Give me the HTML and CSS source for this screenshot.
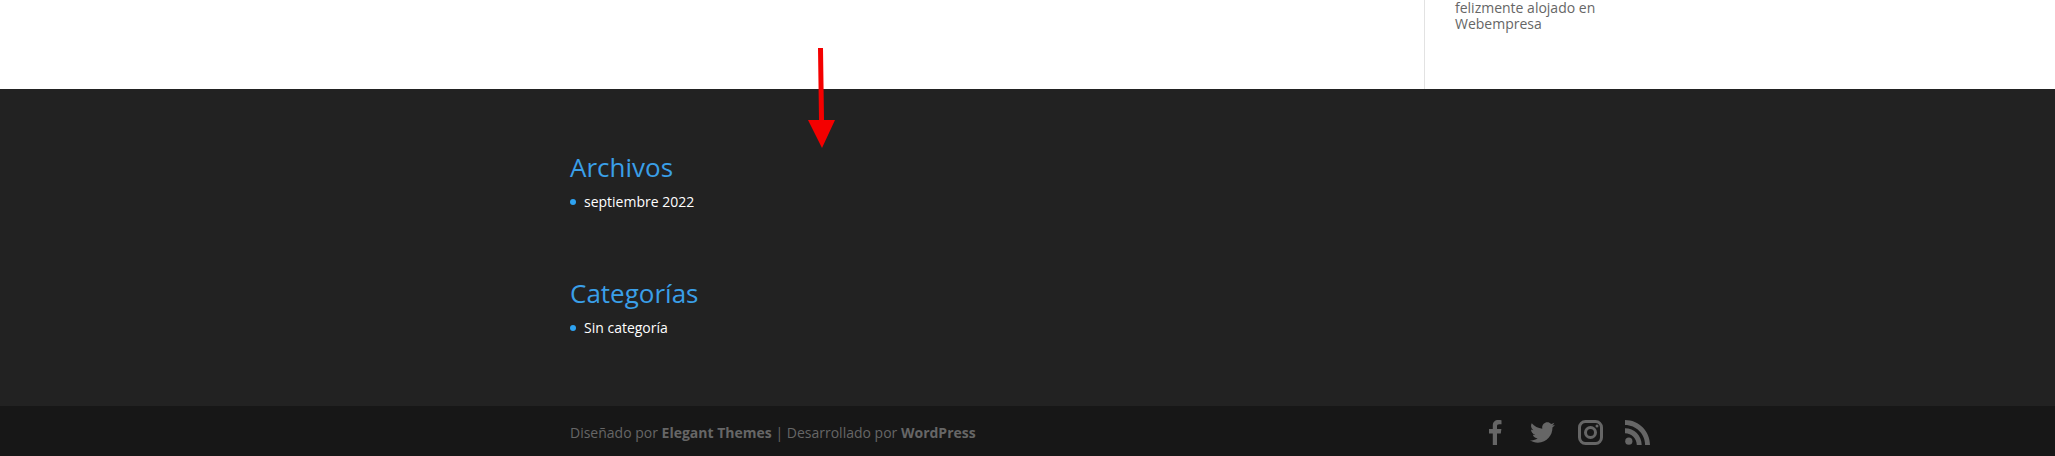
FILE: index.html
```html
<!DOCTYPE html>
<html lang="es">
<head>
    <meta charset="UTF-8" />
    <title>Webempresa</title>
    <link rel="stylesheet" href="styles.css">
</head>
<body>
    <section class="contenido">
        <div class="contenedor contenido-fila">
            <aside class="barra-lateral">
                <p>felizmente alojado en Webempresa</p>
            </aside>
        </div>
    </section>

    <footer>
        <div class="pie-widgets">
            <div class="contenedor">
                <div class="widget">
                    <h4>Archivos</h4>
                    <ul>
                        <li><a href="#">septiembre 2022</a></li>
                    </ul>
                </div>
                <div class="widget">
                    <h4>Categorías</h4>
                    <ul>
                        <li><a href="#">Sin categoría</a></li>
                    </ul>
                </div>
            </div>
        </div>
        <div class="pie-inferior">
            <div class="contenedor pie-fila">
                <p class="creditos">Diseñado por <b>Elegant Themes</b> | Desarrollado por <b>WordPress</b></p>
                <div class="redes">
                    <a href="#" class="red-f"><svg width="13" height="25" viewBox="0 0 13 25"><path d="M8 25V13.500h3.800l.6-4.400H8V6.400c0-1.300.4-2.100 2.200-2.100h2.300V.3C12.100.2 10.700 0 9.200 0 6 0 3.800 1.900 3.800 5.400v3.700H0v4.400h3.800V25z"/></svg></a>
                    <a href="#" class="red-t"><svg width="25" height="25" viewBox="0 0 512 512"><path d="M459.37 151.716c.325 4.548.325 9.097.325 13.645 0 138.72-105.583 298.558-298.558 298.558-59.452 0-114.68-17.219-161.137-47.106 8.447.974 16.568 1.299 25.34 1.299 49.055 0 94.213-16.568 130.274-44.832-46.132-.975-84.792-31.188-98.112-72.772 6.498.974 12.995 1.624 19.818 1.624 9.421 0 18.843-1.3 27.614-3.573-48.081-9.747-84.143-51.98-84.143-102.985v-1.299c13.969 7.797 30.214 12.67 47.431 13.319-28.264-18.843-46.781-51.005-46.781-87.391 0-19.492 5.197-37.36 14.294-52.954 51.655 63.675 129.3 105.258 216.365 109.807-1.624-7.797-2.599-15.918-2.599-24.04 0-57.828 46.782-104.934 104.934-104.934 30.213 0 57.502 12.67 76.67 33.137 23.715-4.548 46.456-13.32 66.599-25.34-7.798 24.366-24.366 44.833-46.132 57.827 21.117-2.273 41.584-8.122 60.426-16.243-14.292 20.791-32.161 39.308-52.628 54.253z"/></svg></a>
                    <a href="#" class="red-i"><svg width="25" height="25" viewBox="0 0 25 25"><rect x="1.500" y="1.500" width="22" height="22" rx="6" class="trazo"/><circle cx="12.500" cy="12.500" r="5" class="trazo"/><circle cx="19" cy="6" r="1.500"/></svg></a>
                    <a href="#" class="red-r"><svg width="25" height="25" viewBox="0 0 25 25"><circle cx="3.800" cy="21.200" r="3.600"/><path d="M0 8.300v4.900c6.600 0 11.800 5.200 11.800 11.800h4.900C16.700 15.700 9.300 8.300 0 8.300z"/><path d="M0 0v4.900C11.100 4.900 20.100 13.900 20.100 25H25C25 11.200 13.800 0 0 0z"/></svg></a>
                </div>
            </div>
        </div>
    </footer>

    <!-- Flecha roja encima de la página -->
    <svg class="flecha" width="28" height="100" viewBox="0 0 28 100">
        <path d="M10 0 L15 0 L16 72 L27 72 L14 100 L0 72 L11 72 Z" fill="#f40000"/>
    </svg>
</body>
</html>
```

FILE: styles.css
```css
* {
    margin: 0;
    padding: 0;
    box-sizing: border-box;
}

body {
    font-family: 'Open Sans', sans-serif;
    font-size: 14px;
    background-color: #ffffff;
    color: #666666;
    overflow: hidden;
}

.contenedor {
    width: 1080px;
    margin-left: 570px;
}

.contenido {
    height: 89px;
    overflow: hidden;
}

.contenido-fila {
    display: flex;
    justify-content: flex-end;
    height: 89px;
}

.barra-lateral {
    width: 226px;
    padding-left: 30px;
    padding-bottom: 57px;
    border-left: 1px solid #e2e2e2;
    display: flex;
    align-items: flex-end;
}

.barra-lateral p {
    line-height: 16px;
    width: 170px;
}

footer {
    background-color: #222222;
}

.pie-widgets {
    height: 317px;
    padding-top: 61px;
}

.widget {
    height: 126px;
}

.widget h4 {
    font-size: 26px;
    font-weight: 400;
    line-height: 34px;
    color: #3a9fe8;
}

.widget ul {
    list-style: none;
    margin-top: 8px;
}

.widget li {
    position: relative;
    padding-left: 14px;
    line-height: 20px;
}

.widget li::before {
    content: "";
    position: absolute;
    left: 0;
    top: 7px;
    width: 6px;
    height: 6px;
    border-radius: 50%;
    background-color: #2ea3f2;
}

.widget a {
    color: #ffffff;
    text-decoration: none;
}

.pie-inferior {
    height: 50px;
    background-color: #171717;
}

.pie-fila {
    display: flex;
    justify-content: space-between;
    align-items: center;
    height: 50px;
    padding-top: 3px;
}

.creditos {
    color: #666666;
}

.redes {
    display: flex;
    align-items: center;
}

.redes a {
    display: flex;
}

.redes svg {
    fill: #666666;
}

.redes .trazo {
    fill: none;
    stroke: #666666;
    stroke-width: 3;
}

.red-t {
    margin-left: 28px;
}

.red-i {
    margin-left: 23px;
}

.red-r {
    margin-left: 22px;
}

.flecha {
    position: absolute;
    left: 808px;
    top: 48px;
}
```
